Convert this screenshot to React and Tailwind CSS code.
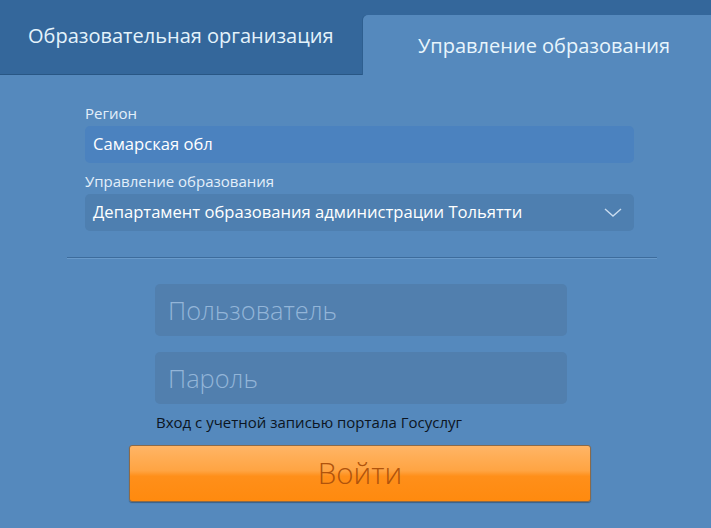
export default function App() {
  return (
    <div className="w-[711px] h-[528px] bg-[#5589bd] overflow-hidden" style={{ fontFamily: '"Open Sans", "Noto Sans", sans-serif' }}>
      <div className="h-[75px] bg-[#34679b] flex items-end">
        <div className="w-[363px] h-[75px] flex items-center pl-[28px] pb-[2px] border-b border-[#285684] text-[20px] text-[#e4f3fb]">
          Образовательная организация
        </div>
        <div className="flex-1 h-[60px] bg-[#5589bd] rounded-tl-[5px] flex items-center pl-[55px] pt-[1px] text-[20px] text-[#e8f5fc] shadow-[-1px_0_0_#2e5f90]">
          Управление образования
        </div>
      </div>
      <div className="pl-[85px] pt-[29px] pr-[77px]">
        <div className="text-[15px] text-[#e3effa] leading-[18px]">Регион</div>
        <div className="mt-[4px] h-[37px] bg-[#4b82bf] rounded-[5px] flex items-center pl-[8px] text-[16.6px] text-white">
          Самарская обл
        </div>
        <div className="mt-[9px] text-[15px] text-[#e3effa] leading-[18px]">Управление образования</div>
        <div className="mt-[4px] h-[37px] bg-[#4e7fb0] rounded-[5px] flex items-center justify-between pl-[8px] pr-[12px] text-[16.6px] text-white">
          <span>Департамент образования администрации Тольятти</span>
          <svg width="18" height="10" viewBox="0 0 18 10" fill="none">
            <path d="M1 1 L9 8 L17 1" stroke="#c9dcef" strokeWidth="1.4" />
          </svg>
        </div>
      </div>
      <div className="ml-[67px] mr-[54px] mt-[26px] h-[2px] border-t border-[#3d6c9c] border-b border-b-[#6a9bcb]" />
      <div className="ml-[155px] w-[412px] pt-[25px] flex flex-col">
        <div className="h-[52px] bg-[#517fae] rounded-[5px] flex items-center pl-[13px] pt-[1px] text-[25.4px] font-light text-[#93b5d8]">
          Пользователь
        </div>
        <div className="mt-[16px] h-[52px] bg-[#517fae] rounded-[5px] flex items-center pl-[13px] pt-[1px] text-[25.4px] font-light text-[#93b5d8]">
          Пароль
        </div>
        <div className="mt-[9px] pl-[1px] text-[15px] text-[#0c1522] leading-[18px] whitespace-nowrap">
          Вход с учетной записью портала Госуслуг
        </div>
      </div>
      <div className="ml-[129px] w-[462px] mt-[14px] h-[57px] rounded-[3px] border border-[#8a6a4a] bg-[linear-gradient(to_bottom,#ffb566_0%,#ffa442_45%,#ff8f1a_55%,#ff8a0e_100%)] flex items-center justify-center text-[29.5px] font-light text-[#b0530c] shadow-[0_1px_1px_rgba(0,0,0,0.3)]">
        Войти
      </div>
    </div>
  );
}
